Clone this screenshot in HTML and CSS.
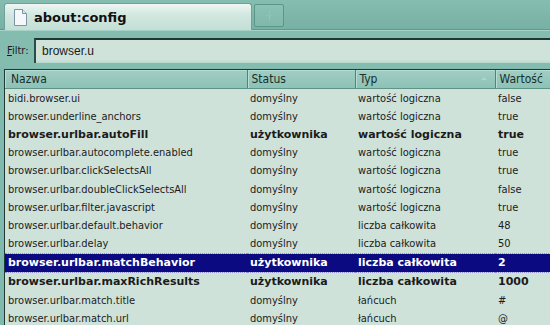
FILE: index.html
```html
<!DOCTYPE html>
<html lang="pl">
<head>
    <meta charset="UTF-8" />
    <title>about:config</title>
    <link rel="stylesheet" href="styles.css">
</head>
<body>
<div class="tabbar">
    <div class="tab active">
        <svg class="tab-icon" width="13" height="17" viewBox="0 0 13 17">
            <path d="M0.5 0.5 H8.5 L12.5 4.5 V16.5 H0.5 Z" fill="#f4f8fb" stroke="#7d93a8"/>
            <path d="M8.5 0.5 V4.5 H12.5" fill="#dfe8f0" stroke="#7d93a8"/>
        </svg>
        <span class="tab-title">about:config</span>
    </div>
    <div class="tab newtab">
        <svg width="9" height="9" viewBox="0 0 9 9">
            <rect x="4" y="0" width="1" height="9" fill="#a9bcb7"/>
            <rect x="1" y="4" width="7" height="1" fill="#c3aaa2"/>
        </svg>
    </div>
</div>

<div class="filterbar">
    <label class="filter-label"><u>F</u>iltr:</label>
    <div class="filter-input">browser.u</div>
</div>

<div class="tree">
    <table>
        <colgroup>
            <col class="c-name">
            <col class="c-status">
            <col class="c-type">
            <col class="c-value">
        </colgroup>
        <thead>
        <tr>
            <th>Nazwa</th>
            <th>Status</th>
            <th class="sorted">Typ<span class="arrow"></span></th>
            <th>Wartość</th>
        </tr>
        </thead>
        <tbody>
        <tr><td>bidi.browser.ui</td><td>domyślny</td><td>wartość logiczna</td><td>false</td></tr>
        <tr><td>browser.underline_anchors</td><td>domyślny</td><td>wartość logiczna</td><td>true</td></tr>
        <tr class="user"><td>browser.urlbar.autoFill</td><td>użytkownika</td><td>wartość logiczna</td><td>true</td></tr>
        <tr><td>browser.urlbar.autocomplete.enabled</td><td>domyślny</td><td>wartość logiczna</td><td>true</td></tr>
        <tr><td>browser.urlbar.clickSelectsAll</td><td>domyślny</td><td>wartość logiczna</td><td>true</td></tr>
        <tr><td>browser.urlbar.doubleClickSelectsAll</td><td>domyślny</td><td>wartość logiczna</td><td>false</td></tr>
        <tr><td>browser.urlbar.filter.javascript</td><td>domyślny</td><td>wartość logiczna</td><td>true</td></tr>
        <tr><td>browser.urlbar.default.behavior</td><td>domyślny</td><td>liczba całkowita</td><td>48</td></tr>
        <tr><td>browser.urlbar.delay</td><td>domyślny</td><td>liczba całkowita</td><td>50</td></tr>
        <tr class="user selected"><td>browser.urlbar.matchBehavior</td><td>użytkownika</td><td>liczba całkowita</td><td>2</td></tr>
        <tr class="user"><td>browser.urlbar.maxRichResults</td><td>użytkownika</td><td>liczba całkowita</td><td>1000</td></tr>
        <tr><td>browser.urlbar.match.title</td><td>domyślny</td><td>łańcuch</td><td>#</td></tr>
        <tr><td>browser.urlbar.match.url</td><td>domyślny</td><td>łańcuch</td><td>@</td></tr>
        </tbody>
    </table>
</div>
</body>
</html>
```

FILE: styles.css
```css
html, body {
  margin: 0;
  width: 550px;
  height: 325px;
  overflow: hidden;
}

body {
  background: #80b9ad;
  font-family: "Liberation Sans", Arial, sans-serif;
  font-size: 12px;
  color: #1b1b1b;
}

.tabbar {
  height: 30px;
  display: flex;
  align-items: flex-end;
  padding-left: 4px;
  gap: 2px;
  background: linear-gradient(#86bdb1, #77b0a4);
  border-bottom: 1px solid #5f9a8e;
  box-sizing: border-box;
}

.tab {
  box-sizing: border-box;
  display: flex;
  align-items: center;
}

.tab.active {
  width: 248px;
  height: 27px;
  margin-bottom: -1px;
  padding-left: 9px;
  background: linear-gradient(#eef6f3, #d2e8e0 40%, #c3dfd5);
  border: 1px solid #6fa397;
  border-bottom: none;
  border-radius: 3px 3px 0 0;
}

.tab-icon {
  margin-right: 7px;
}

.tab-title {
  font-family: "DejaVu Sans", sans-serif;
  font-weight: bold;
  font-size: 13px;
  color: #111;
}

.tab.newtab {
  width: 30px;
  height: 23px;
  margin-bottom: 2px;
  justify-content: center;
  background: linear-gradient(#8cc2b6, #80b8ac);
  border: 1px solid #5e958a;
  border-radius: 2px;
}

.filterbar {
  height: 38px;
  display: flex;
  align-items: center;
  padding: 1px 0 0 7px;
  box-sizing: border-box;
  background: #84bcb0;
  border-top: 1px solid #a6d2c8;
}

.filter-label {
  width: 27px;
  font-family: "DejaVu Sans Condensed", "DejaVu Sans", sans-serif;
  font-size: 11px;
}

.filter-input {
  flex: 1;
  height: 25px;
  box-sizing: border-box;
  padding-left: 6px;
  display: flex;
  align-items: center;
  background: linear-gradient(#cfe3db 85%, #b9d8cd);
  border-top: 2px solid #1c3732;
  border-left: 2px solid #2c4d46;
  font-size: 12px;
}

.tree {
  margin: 1px 0 0 4px;
  border-left: 1px solid #1f3a35;
  border-top: 1px solid #1f3a35;
  background: #cfe2da;
  height: 260px;
  overflow: hidden;
}

table {
  width: 600px;
  table-layout: fixed;
  border-collapse: collapse;
}

.c-name { width: 242px; }
.c-status { width: 108px; }
.c-type { width: 140px; }
.c-value { width: 110px; }

th {
  height: 18px;
  padding: 0 0 0 4px;
  text-align: left;
  font-weight: normal;
  font-family: "DejaVu Sans Condensed", "DejaVu Sans", sans-serif;
  font-size: 12px;
  color: #16302b;
  background: linear-gradient(#a1cdc3, #8dc2b6);
  border-right: 1px solid #4f8478;
  border-bottom: 1px solid #5f9488;
  box-shadow: inset 1px 1px 0 #b8ddd4;
}

th:first-child {
  padding-left: 6px;
}

th.sorted {
  position: relative;
}

.arrow {
  position: absolute;
  right: 8px;
  top: 7px;
  width: 0;
  height: 0;
  border-left: 3px solid transparent;
  border-right: 3px solid transparent;
  border-bottom: 3px solid #b3d3ca;
}

td {
  height: 18.2px;
  padding: 0 0 0 3px;
  white-space: nowrap;
  overflow: hidden;
  font-family: "DejaVu Sans Condensed", "DejaVu Sans", sans-serif;
  font-size: 11px;
}

tr.user td {
  font-weight: bold;
  font-family: "DejaVu Sans", sans-serif;
}

tr.selected td {
  background: #0b0a80;
  color: #fff;
  border-top: 1px dotted #8f8fd0;
  border-bottom: 1px dotted #8f8fd0;
}
```
